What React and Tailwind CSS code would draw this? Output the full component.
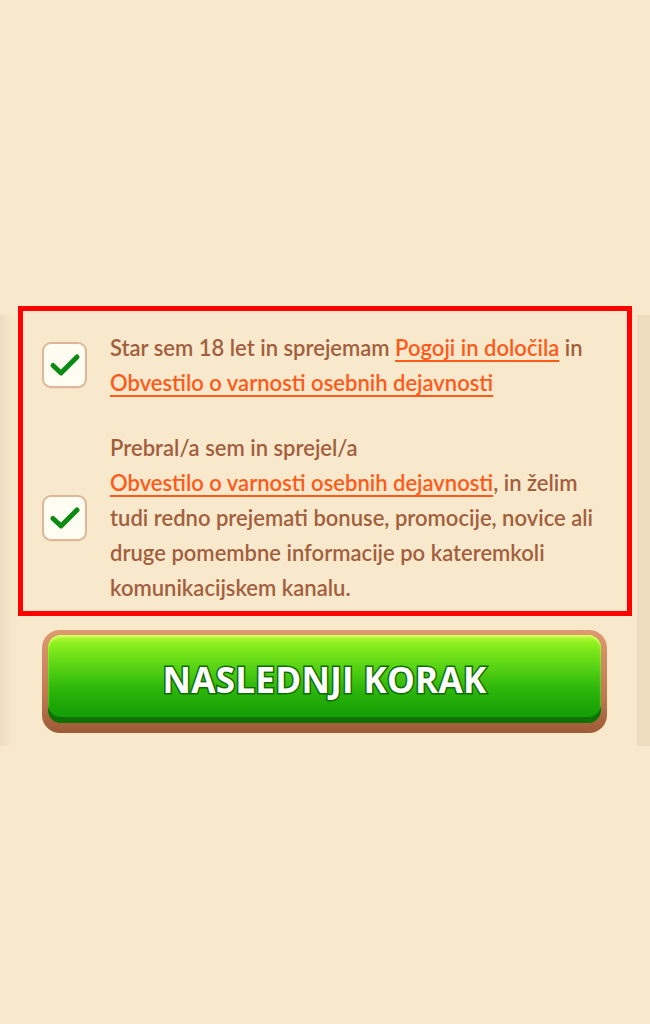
import { Fragment } from 'react';

const BODY_FONT = "font-['Lato','Open_Sans',sans-serif]";

const CONSENTS = [
  {
    id: 'age',
    lines: [
      [
        { t: 'Star sem 18 let in sprejemam ' },
        { t: 'Pogoji in določila', link: true },
        { t: ' in' },
      ],
      [{ t: 'Obvestilo o varnosti osebnih dejavnosti', link: true }],
    ],
  },
  {
    id: 'marketing',
    lines: [
      [{ t: 'Prebral/a sem in sprejel/a' }],
      [
        { t: 'Obvestilo o varnosti osebnih dejavnosti', link: true },
        { t: ', in želim' },
      ],
      [{ t: 'tudi redno prejemati bonuse, promocije, novice ali' }],
      [{ t: 'druge pomembne informacije po kateremkoli' }],
      [{ t: 'komunikacijskem kanalu.' }],
    ],
  },
];

function CheckBox() {
  return (
    <div className="w-[45px] h-[46px] shrink-0 rounded-[9px] border-2 border-[#dcb898] bg-[#fffdf2] flex items-center justify-center shadow-[0_1px_0_#f3dcc0]">
      <svg width="32" height="26" viewBox="0 0 32 26" fill="none">
        <path
          d="M4 13.5 L12 21 L28 5"
          stroke="#0b8a14"
          strokeWidth="5"
          strokeLinecap="round"
          strokeLinejoin="round"
        />
      </svg>
    </div>
  );
}

function ConsentRow({ lines }) {
  return (
    <div className="flex items-center gap-[23px]">
      <CheckBox />
      <div className={`${BODY_FONT} text-[22px] leading-[35px] font-semibold text-[#a35f3d]`}>
        {lines.map((line, i) => (
          <div key={i} className="whitespace-nowrap">
            {line.map((seg, j) => (
              <Fragment key={j}>
                {seg.link ? (
                  <span className="text-[#ff5a1a] underline decoration-2 underline-offset-[4px]">
                    {seg.t}
                  </span>
                ) : (
                  seg.t
                )}
              </Fragment>
            ))}
          </div>
        ))}
      </div>
    </div>
  );
}

export default function App() {
  return (
    <div className="w-[650px] h-[1024px] bg-[#f8e9cd] overflow-hidden">
      <div className="h-[306px]" />

      {/* consent panel */}
      <div className="relative pb-[13px]">
        {/* faint panel edges */}
        <div className="absolute left-0 top-[9px] bottom-0 w-[15px] bg-[linear-gradient(to_right,#efdcbf,#f8e9cd)]" />
        <div className="absolute right-0 top-[9px] bottom-0 w-[13px] bg-[#efdcbf]" />

        <div className="relative mx-[18px] border-[5px] border-[#ff0000] pl-[19px] pt-[19px] pb-[6px] flex flex-col gap-[30px]">
          {CONSENTS.map((c) => (
            <ConsentRow key={c.id} lines={c.lines} />
          ))}
        </div>

        <div className="relative mt-[14px] mx-[42px] w-[565px] rounded-[18px] bg-[linear-gradient(to_bottom,#dd9a70,#c47b52_60%,#9c5a36)] px-[6px] pt-[5px] pb-[10px]">
          <div className="h-[88px] rounded-[13px] bg-[linear-gradient(to_bottom,#b7fb38_0%,#8cee1e_10%,#5ad515_35%,#2fb80b_60%,#19a306_85%,#14990a_100%)] shadow-[inset_0_-6px_0_#0e7304,inset_0_2px_2px_#d8ff6a] flex items-center justify-center pt-[2px]">
            <span className="font-['Open_Sans',sans-serif] font-bold text-[35px] tracking-[0.3px] text-white [-webkit-text-stroke:3px_#0f6d06] [paint-order:stroke_fill]">
              NASLEDNJI KORAK
            </span>
          </div>
        </div>
      </div>
    </div>
  );
}
